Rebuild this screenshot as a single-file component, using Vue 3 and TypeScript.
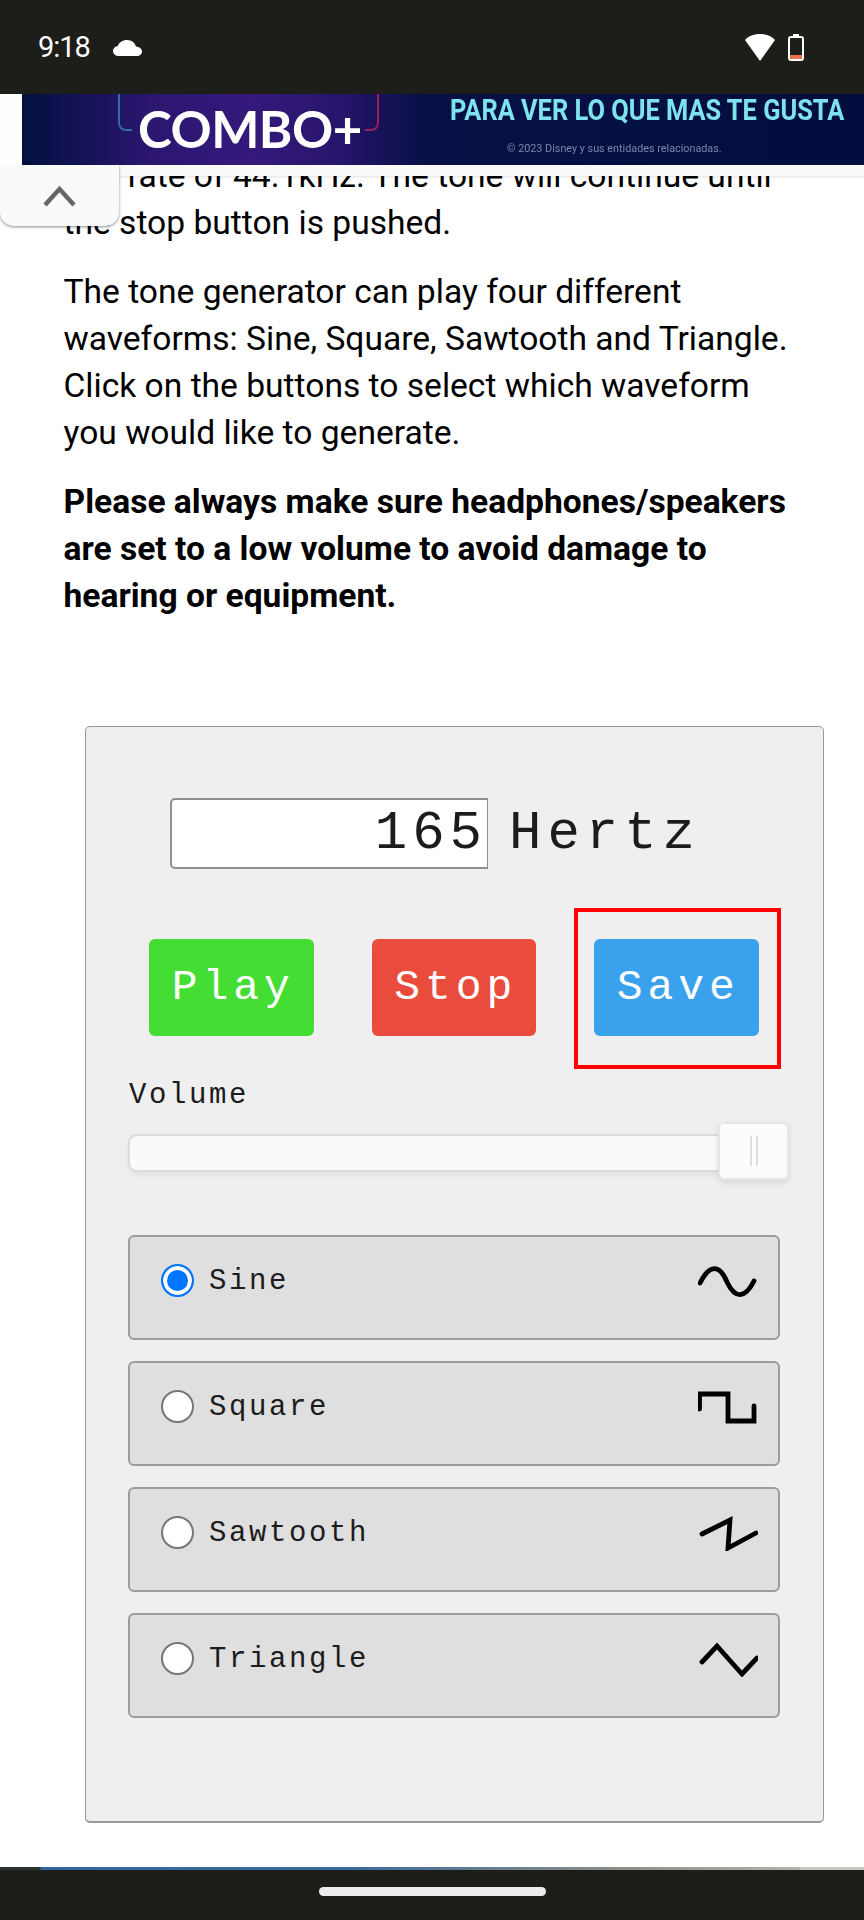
<script setup lang="ts">
import { ref } from 'vue'

interface Wave {
  name: string
  path: string
}

const waves: Wave[] = [
  { name: 'Sine', path: 'M2 20C12 0 22 2 29 19C37 36 47 36 56 18' },
  { name: 'Square', path: 'M1.5 20V5H30V32H56V17' },
  { name: 'Sawtooth', path: 'M4 19L32 5L30 33L58 18' },
  { name: 'Triangle', path: 'M4 21L19 5L44 33L59 17' },
]
const selected = ref('Sine')
const hertz = ref(165)
</script>

<template>
  <div class="screen">
    <header class="status">
      <div class="status-left">
        <span class="time">9:18</span>
        <svg class="cloud" width="29" height="16" viewBox="0 0 29 16">
          <path d="M5.500 16C2.500 16 0 13.800 0 11C0 8.500 2 6.300 4.800 6C6 2.500 9.500 0 14 0C18.500 0 22 2.800 23 6.500C26.200 6.800 29 8.800 29 11.500C29 14 26.800 16 24 16Z" fill="#fff" />
        </svg>
      </div>
      <div class="status-right">
        <svg width="30" height="27" viewBox="0 0 30 27">
          <path d="M15 0C8 0 3 2.500 0 6L15 27L30 6C27 2.500 22 0 15 0Z" fill="#fff" />
        </svg>
        <svg width="16" height="27" viewBox="0 0 16 27">
          <rect x="5" y="0" width="6" height="3" fill="#fff" />
          <rect x="1" y="3" width="14" height="23" rx="2" fill="#1d1d19" stroke="#fff" stroke-width="2" />
          <rect x="2" y="21" width="12" height="4" fill="#f0704a" />
        </svg>
      </div>
    </header>

    <div class="ad-row">
      <div class="ad">
        <span class="ad-frame ad-frame-left"></span>
        <span class="ad-frame ad-frame-right"></span>
        <span class="ad-combo">COMBO+</span>
        <div class="ad-copy">
          <span class="ad-claim">PARA VER LO QUE MAS TE GUSTA</span>
          <span class="ad-legal">© 2023 Disney y sus entidades relacionadas.</span>
        </div>
      </div>
    </div>

    <main class="article">
      <div class="ad-shelf"></div>
      <button class="collapse" type="button" aria-label="Collapse">
        <svg width="35" height="22" viewBox="0 0 35 22">
          <path d="M3 20L17.500 4L32 20" fill="none" stroke="#666" stroke-width="4.500" />
        </svg>
      </button>

      <p class="first">at a rate of 44.1kHz. The tone will continue until the stop button is pushed.</p>
      <p>The tone generator can play four different waveforms: Sine, Square, Sawtooth and Triangle. Click on the buttons to select which waveform you would like to generate.</p>
      <p><strong>Please always make sure headphones/speakers are set to a low volume to avoid damage to hearing or equipment.</strong></p>

      <section class="panel">
        <div class="freq">
          <input v-model="hertz" class="freq-input" type="text" />
          <span class="freq-unit">Hertz</span>
        </div>

        <div class="actions">
          <button class="action play" type="button">Play</button>
          <button class="action stop" type="button">Stop</button>
          <div class="save-wrap">
            <button class="action save" type="button">Save</button>
            <span class="highlight"></span>
          </div>
        </div>

        <div class="volume-label">Volume</div>
        <div class="slider">
          <div class="slider-handle"><i></i><i></i></div>
        </div>

        <div class="waves">
          <label v-for="wave in waves" :key="wave.name" class="wave">
            <input v-model="selected" class="wave-radio" type="radio" name="wave" :value="wave.name" />
            <span class="wave-name">{{ wave.name }}</span>
            <svg class="wave-icon" width="60" height="36" viewBox="0 0 60 36">
              <path :d="wave.path" fill="none" stroke="#000" stroke-width="4.800" stroke-linecap="round" stroke-linejoin="miter" />
            </svg>
          </label>
        </div>
      </section>
    </main>

    <footer class="nav">
      <div class="nav-line"></div>
      <div class="nav-pill"></div>
    </footer>
  </div>
</template>

<style scoped>
.screen {
  width: 864px;
  height: 1920px;
  display: flex;
  flex-direction: column;
  overflow: hidden;
  background: #fff;
  font-family: Roboto, "Liberation Sans", sans-serif;
  color: #000;
}
.status {
  height: 94px;
  flex: none;
  background: #1d1d19;
  display: flex;
  align-items: center;
  justify-content: space-between;
  padding: 0 60px 0 38px;
  box-sizing: border-box;
}
.status-left {
  display: flex;
  align-items: center;
  gap: 23px;
}
.status-right {
  display: flex;
  align-items: center;
  gap: 13px;
  margin-top: 1px;
}
.time {
  color: #fff;
  font-size: 29px;
  line-height: 30px;
  letter-spacing: -1px;
}
.cloud {
  margin-top: 1px;
}
.ad-row {
  height: 71px;
  flex: none;
  background: #fdfdfd;
  padding-left: 22px;
}
.ad {
  position: relative;
  height: 71px;
  overflow: hidden;
  display: flex;
  background: linear-gradient(90deg, #02103f 0, #2b1670 130px, #35197c 230px, #26156a 320px, #061046 400px, #020e3e 100%);
}
.ad-frame {
  position: absolute;
  top: -20px;
  height: 55px;
  width: 12px;
  border-bottom: 2px solid;
}
.ad-frame-left {
  left: 96px;
  border-left: 2px solid #2d6d9f;
  border-color: #2d6d9f;
  border-bottom-left-radius: 8px;
}
.ad-frame-right {
  left: 343px;
  border-right: 2px solid #a01c5c;
  border-color: #a01c5c;
  border-bottom-right-radius: 8px;
}
.ad-combo {
  position: absolute;
  left: 116px;
  top: 7px;
  color: #fff;
  font-family: Lato, sans-serif;
  font-weight: 700;
  font-size: 51px;
  line-height: 56px;
  letter-spacing: -0.5px;
  filter: blur(0.7px);
}
.ad-copy {
  position: absolute;
  left: 428px;
  top: 0;
  width: 395px;
  display: flex;
  flex-direction: column;
  align-items: flex-start;
}
.ad-claim {
  margin-top: 2.500px;
  color: #7fe3ee;
  font-family: Roboto, sans-serif;
  font-weight: 700;
  font-size: 25.400px;
  line-height: 25px;
  white-space: nowrap;
  transform: scaleY(1.18);
  filter: blur(0.5px);
}
.ad-legal {
  color: #7d87a8;
  font-size: 10.800px;
  line-height: 12px;
  margin: 21.500px 0 0 57px;
  white-space: nowrap;
  filter: blur(0.4px);
}
.article {
  position: relative;
  flex: 1;
  min-height: 0;
  overflow: hidden;
  padding: 0 64px 0 63.500px;
  box-sizing: border-box;
}
.ad-shelf {
  position: absolute;
  left: 0;
  right: 0;
  top: 0;
  height: 11px;
  background: #fafafa;
  box-shadow: 0 1px 3px rgba(0, 0, 0, 0.12);
  z-index: 2;
}
.collapse {
  position: absolute;
  left: 0;
  top: 0;
  width: 119px;
  height: 61px;
  padding: 20px 0 0;
  border: 0;
  border-radius: 0 0 14px 14px;
  background: #fafafa;
  box-shadow: 0 1px 3px rgba(0, 0, 0, 0.45);
  z-index: 3;
  display: flex;
  justify-content: center;
  align-items: flex-start;
  box-sizing: border-box;
}
p {
  margin: 0 0 21px;
  font-size: 33.600px;
  line-height: 47.250px;
}
.first {
  margin-top: -13px;
}
.panel {
  margin: 107px 0 0 21.500px;
  width: 739px;
  height: 1097px;
  box-sizing: border-box;
  border: 1px solid #999;
  border-bottom-width: 2px;
  border-radius: 5px;
  background: #efefef;
  padding: 71px 43px 0 42px;
  font-family: "Liberation Mono", "Courier New", monospace;
  color: #1c1c1c;
}
.freq {
  display: flex;
  align-items: center;
  padding-left: 42px;
  height: 71px;
}
.freq-input {
  width: 318px;
  height: 71px;
  box-sizing: border-box;
  border: 2px solid #8f8f8f;
  border-right-width: 1px;
  border-radius: 5px 0 0 5px;
  background: #fff;
  padding: 0;
  outline: 0;
  text-align: right;
  font: inherit;
  font-size: 54px;
  letter-spacing: 5px;
  color: #1c1c1c;
}
.freq-unit {
  margin-left: 21px;
  font-size: 54px;
  letter-spacing: 6px;
}
.actions {
  display: flex;
  gap: 58px;
  margin: 70px 0 0 21px;
}
.action {
  display: block;
  width: 164.500px;
  height: 97px;
  border: 0;
  border-radius: 6px;
  padding: 0 0 0 4px;
  font: inherit;
  font-size: 43px;
  letter-spacing: 5px;
  color: #fff;
}
.play { background: #44dd33; }
.stop { background: #e94b3c; }
.save { background: #3aa2ec; }
.save-wrap {
  position: relative;
}
.highlight {
  position: absolute;
  left: -20px;
  right: -22px;
  top: -31px;
  bottom: -33px;
  border: 4px solid #fe0000;
}
.volume-label {
  margin: 43px 0 0 1px;
  font-size: 29px;
  line-height: 34px;
  letter-spacing: 2.600px;
}
.slider {
  position: relative;
  margin-top: 21px;
  height: 38px;
  box-sizing: border-box;
  border: 2px solid #dcdcdc;
  border-radius: 9px;
  background: #fafafa;
  box-shadow: 0 3px 6px rgba(0, 0, 0, 0.06);
}
.slider-handle {
  position: absolute;
  right: -11px;
  top: -14px;
  width: 71px;
  height: 58px;
  box-sizing: border-box;
  border: 2px solid #e6e6e6;
  border-radius: 6px;
  background: #fbfbfb;
  box-shadow: 0 3px 6px rgba(0, 0, 0, 0.1);
  display: flex;
  justify-content: center;
  align-items: center;
  gap: 4px;
}
.slider-handle i {
  display: block;
  width: 2px;
  height: 30px;
  background: #dfdfdf;
}
.waves {
  margin-top: 63px;
  display: flex;
  flex-direction: column;
  gap: 21.500px;
}
.wave {
  height: 104.500px;
  box-sizing: border-box;
  border: 2px solid #9c9c9c;
  border-radius: 6px;
  background: #dfdfdf;
  padding: 27px 20px 0 31px;
  display: flex;
  align-items: flex-start;
}
.wave-radio {
  appearance: none;
  width: 33px;
  height: 33px;
  margin: 0;
  flex: none;
  box-sizing: border-box;
  border: 2px solid #767676;
  border-radius: 50%;
  background: #fff;
}
.wave-radio:checked {
  border-color: #0075ff;
  background: #0075ff;
  box-shadow: inset 0 0 0 4px #fff;
}
.wave-name {
  margin: 1px 0 0 15px;
  font-size: 29px;
  line-height: 33px;
  letter-spacing: 2.600px;
}
.wave-icon {
  margin: -1px 0 0 auto;
  filter: blur(0.4px);
}
.nav {
  position: relative;
  height: 53px;
  flex: none;
  background: #1d1d19;
  display: flex;
  justify-content: center;
}
.nav-line {
  position: absolute;
  left: 0;
  right: 0;
  top: 0;
  height: 3px;
  background: linear-gradient(90deg, #2c3230 0, #2c3230 40px, #33659f 41px, #3d6a9c 350px, #8b8f88 620px, #b5b2a8 800px, #c8c8c2 801px);
}
.nav-pill {
  width: 227px;
  height: 9px;
  margin-top: 20px;
  border-radius: 5px;
  background: #ececec;
}
</style>
<style>
html, body {
  margin: 0;
  background: #fff;
}
</style>
